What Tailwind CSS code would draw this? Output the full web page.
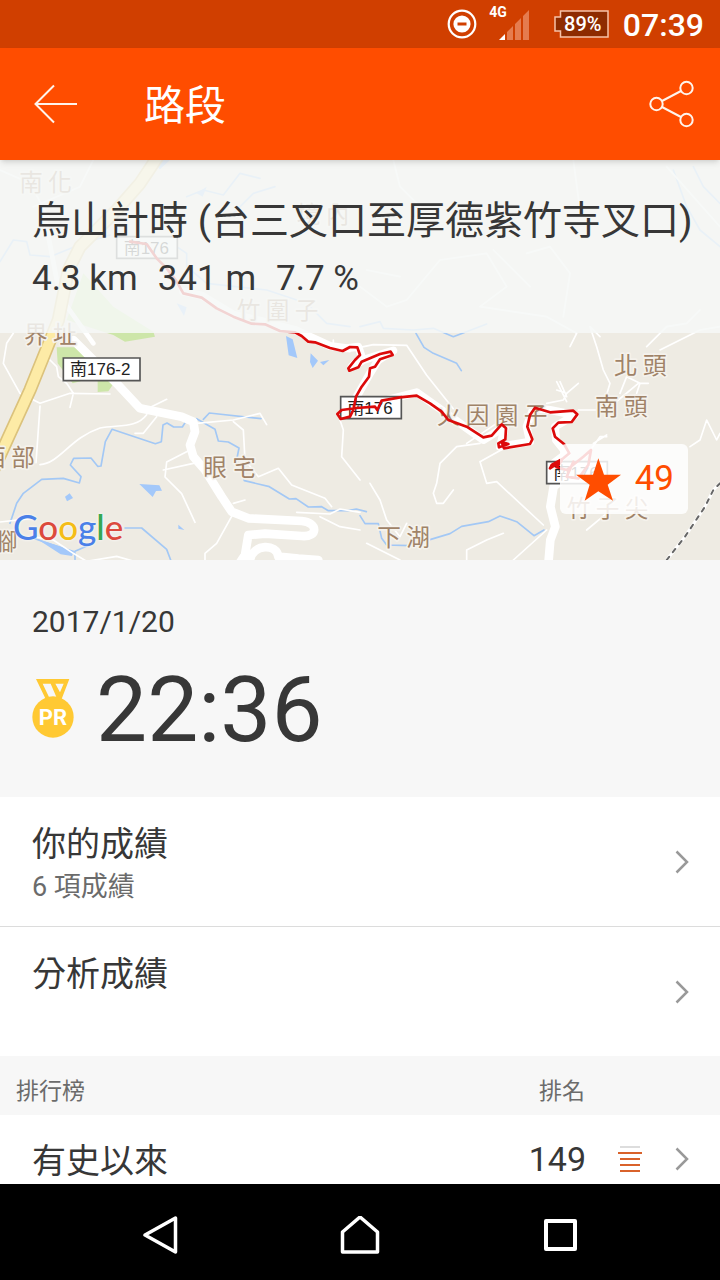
<!DOCTYPE html>
<html lang="zh-Hant">
<head>
    <meta charset="UTF-8">
    <meta name="viewport" content="width=device-width, initial-scale=1.0">
    <title>路段</title>
    <script src="https://cdn.jsdelivr.net/npm/@tailwindcss/browser@4"></script>
</head>
<body class="bg-white text-[#373737] font-[Roboto,'Noto_Sans_CJK_TC',sans-serif]">
    <div class="flex h-screen flex-col">
        <!-- Status bar -->
        <div class="flex h-12 shrink-0 items-center justify-end bg-[#d03f00] pr-4 text-white">
            <svg class="mr-3 size-[30px]" viewBox="0 0 30 30" fill="none">
                <circle cx="15" cy="15" r="13.3" stroke="#fff" stroke-width="2.2"/>
                <circle cx="15" cy="15" r="8.6" fill="#fff"/>
                <path d="M10.5 15h9" stroke="#d03f00" stroke-width="3"/>
            </svg>
            <div class="mr-6 flex h-9 items-start">
                <span class="text-sm/3 font-bold">4G</span>
                <svg class="-ml-2 h-9 w-[30px]" viewBox="0 0 30 36">
                    <path d="M0 34l6-6v6z" fill="#fff"/>
                    <path d="M8 34v-8l6-6v14zM16 34V18l6-6v22zM24 34V10l6-6v30z" fill="#e57c4f"/>
                </svg>
            </div>
            <div class="relative mr-[14px] flex h-7 w-[56px] items-center justify-center pl-1">
                <svg class="absolute inset-0 size-full" viewBox="0 0 56 28">
                    <path d="M7.500 1H55v26H7.500v-6H2V7h5.500z" fill="#8e2b00" stroke="#f6c2a8" stroke-width="1.500"/>
                </svg>
                <span class="relative text-xl/6 font-medium">89%</span>
            </div>
            <span class="pt-[2px] text-[32px]/[40px] font-medium">07:39</span>
        </div>

        <!-- App bar -->
        <header class="relative z-10 flex h-28 shrink-0 items-center bg-[#ff4d00] px-6 text-white shadow-md">
            <button type="button" aria-label="返回" class="flex h-16 w-16 items-center justify-center">
                <svg class="h-10 w-11" viewBox="0 0 44 40" fill="none" stroke="#fff4ec" stroke-width="2">
                    <path d="M20 1.500L1.500 20 20 38.500M1.500 20H43"/>
                </svg>
            </button>
            <h1 class="ml-14 flex-1 pt-1 text-[41px]/[56px]">路段</h1>
            <button type="button" aria-label="分享" class="flex h-16 w-12 items-center justify-center">
                <svg class="h-12 w-12" viewBox="0 0 48 48" fill="none" stroke="#fff4ec" stroke-width="2">
                    <circle cx="8.500" cy="24" r="6.200"/>
                    <circle cx="38.500" cy="8" r="6.200"/>
                    <circle cx="38.500" cy="40" r="6.200"/>
                    <path d="M14 21L33 11M14 27l19 10"/>
                </svg>
            </button>
        </header>

        <main class="min-h-0 flex-1 overflow-y-auto [scrollbar-width:none]">
            <!-- Map -->
            <section class="relative h-[400px] overflow-hidden bg-[#eeebe3]">
                <svg class="absolute inset-0 size-full" viewBox="0 0 2160 1200" preserveAspectRatio="xMidYMid slice" fill="none" stroke-linejoin="round" stroke-linecap="round">
                    <!-- parks -->
                    <path d="M200 480L250 340 340 440 460 515 465 530 375 545 340 525zM170 562h60l110 110-15 22-32 2v-46l-75 20-45-60z" fill="#cde6a9"/>
                    <!-- water -->
                    <g stroke="#a3c8f5" stroke-width="5">
                        <path d="M0 305L40 240 80 245 90 285 150 290 250 250 330 225M560 110l50-20 60 15 50-65 60 15M700 160l60-60 65-20M530 260l30 20v40l60 50 180 20 120 40 60 60 70 10"/>
                        <path d="M30 1090l20-60 20-30 55-42 65-3 48 14 5-19-32-35 10-20 52-1 20 25 10-1 13-73 20-37 130 43 18-6 5-50 12-6 20 12h26l18-28M590 776l55 32 10 35 30 3 32 18-6 30 22 68 75 18 60 37 20-1 37 25 40-1 20 12h60l24-5 30 8M610 778l18-19 155 17M105 1136l120 42v20M375 1104h50l75 64 12 32M225 1174l50-22"/>
                        <path d="M1080 500l60-15 10 20 90 5 60-5 60 25 100-38M1248 520l24 42 28 18 70 30 14 22M1080 1067l15 24h40l10 44 15 20 70 2 120-36 35-22 80-14 35-17 50 17 52 42 30-17M2020 30l40 110 40 70 60 50M2080 20l30 60 50 50"/>
                    </g>
                    <path d="M858 528l20 10 14 56-26-8zM932 580l22 22-16 22-8-18zM960 606l28-6-18 16zM418 972l60 4 8 16-18 1-10 18zM195 1010l14-10 10 14-18 10zM535 1094l18 16-18-4zM110 1136l112 36-6 16-34-5zM450 0h60l-30 28zM530 430l30 12-8 26zM590 100l30-20-12 30z" fill="#a3c8fa"/>
                    <!-- small roads -->
                    <g stroke="#fff" stroke-width="5">
                        <path d="M0 30l90 40 60 110M280 0l-40 80-140 60M40 520l-20 30-10 60 50 90 60 30 90-30 120 2M150 600l20 20 5 30 25 20 20 30-10 42M120 738l-12 170M120 914c60-5 90-80 180-110 60-10 110 0 140-40M430 752l70-34M470 770l-40 50-25 0M590 790l110-10 80-20 20 34M700 785l30 25 5 90 40 50 60-25 40 50 100 40 20 25M570 870l-70 36-5 45 50 50 40 86M490 930l90-20M700 1060l-50 90-35 30v20M700 1030l35-10M0 1086l90-10M100 1130l60 10 60 40 40 24 90-15 70 20M890 1057l100 5 30-15 60 10M960 1070l60 30 60 10M1020 780l10 30-5 80 55 70M1000 540v25l50 10"/>
                        <path d="M1080 562l40-8 100 2 60 90 80 100M1400 850l90-60M1440 850l-70 10-50 50-10 60-10 30 10 30h20l30-40M1440 905l20 65 30-5 140 130M1440 905l90-50M1640 730l50-10 10-20-30-10M1700 725l-30-60M1700 710l-20-45M1700 700l35-30M1735 750l90 0 30-30 60-50 30 0M1800 530l-30-30 20 60 20 70 20 40-15 50M1940 560l60-60 60-10 40-40M1980 570l120-60 60-10M1860 700l20-50 40 20-10 30M1780 850l40-25M1700 970l100-140 20 0M1640 1110l-100 90M1760 1110l60-50M2070 860l30-20 20-60 30 60 10-20M1110 970l30 50 20 60 40 50 20-40M1400 1200l0-30 60-30 50-20M1100 1150l100 50M1080 380l80 60 60-20 100-120 140-20 60 100-80 60 200 30 90 50-20 40M1180 0l20 80 60 60M1480 270l110 110M1580 280l70-20 60 80-20 130M1720 0l20 150M2000 20l160 180M1100 330l100 20"/>
                    </g>
                    <!-- route 176-2 -->
                    <path d="M130 150l50 260 100 140" stroke="#fff" stroke-width="14"/>
                    <path d="M220 540L350 670l70 75 125 25 35 15 5 30-15 40 10 35 35 40 50 80 30 45 50 20 160 8c50 4 50 50 0 45l-110-7-50 4-10 60-20 30" stroke="#fff" stroke-width="26"/>
                    <path d="M750 1200c10-50 80-50 85-10l60 6 60 4" stroke="#fff" stroke-width="26"/>
                    <path d="M1646 1200l5-60 15-40-15-60 10-60 60-50" stroke="#fff" stroke-width="26"/>
                    <!-- highway -->
                    <path d="M480-20L420 70 350 150 240 260 205 330 175 480 90 690-20 930" stroke="#dbc27c" stroke-width="40"/>
                    <path d="M480-20L420 70 350 150 240 260 205 330 175 480 90 690-20 930" stroke="#fdeba6" stroke-width="30"/>
                    <!-- railway -->
                    <path d="M2000 1200l55-70 60-90 25-50 25-25" stroke="#fff" stroke-width="9"/>
                    <path d="M2000 1200l55-70 60-90 25-50 25-25" stroke="#666" stroke-width="6" stroke-dasharray="12 18"/>
                    <!-- route 176 -->
                    <path d="M550 395L605 407 700 464 795 486 885 510 990 558 1040 565 1075 560 1085 590 1055 620 1095 598 1180 572 1135 600 1110 640 1070 710 1055 760 1025 765M1130 728L1250 697 1325 750 1400 805 1450 840 1515 800 1500 860 1590 845 1580 800 1600 745 1650 750 1725 765 1665 800 1668 840 1700 880 1660 910" stroke="#fff" stroke-width="24"/>
                    <!-- road plates -->
                    <g fill="#fff" stroke="#555" stroke-width="5" stroke-linejoin="miter">
                        <path d="M190 594h230v68H190zM350 230h182v65H350zM1022 710h182v66h-182zM1640 905h182v66h-182z"/>
                    </g>
                    <g class="font-['Liberation_Sans','Noto_Sans_CJK_TC',sans-serif]" font-size="51" fill="#222">
                        <text x="210" y="646">南176-2</text>
                        <text x="371" y="281">南176</text>
                        <text x="1042" y="762">南176</text>
                        <text x="1660" y="957">南176</text>
                    </g>
                    <!-- place names -->
                    <g class="font-['Noto_Sans_CJK_TC',sans-serif] tracking-[16px]" font-size="71" fill="#a08368" stroke="#f5f2ec" stroke-width="10" paint-order="stroke">
                        <text x="58" y="94">南化</text>
                        <text x="890" y="190">境內</text>
                        <text x="710" y="478">竹圍子</text>
                        <text x="72" y="550">界址</text>
                        <text x="-53" y="917">西部</text>
                        <text x="610" y="947">眼宅</text>
                        <text x="-18" y="1170">腳</text>
                        <text x="1842" y="643">北頭</text>
                        <text x="1785" y="764">南頭</text>
                        <text x="1310" y="792">火因園子</text>
                        <text x="1700" y="1070">竹子尖</text>
                        <text x="1132" y="1158">下湖</text>
                    </g>
                    <!-- segment track -->
                    <path d="M390 245L440 252 470 295 500 325 530 365 550 400 605 413 650 445 700 470 755 491 795 493 840 513 885 517 905 528 925 545 945 547 990 564 1028 573 1050 561 1072 562 1080 585 1065 600 1045 625 1048 632 1075 622 1085 605 1140 582 1172 575 1178 585 1140 598 1125 620 1110 625 1107 650 1085 680 1068 710 1060 750 1050 770 1022 777 1012 762 1025 750 1070 744 1125 740 1132 750 1145 722 1200 712 1250 707 1290 730 1325 755 1345 780 1400 800 1450 832 1475 827 1505 793 1518 805 1516 838 1495 850 1497 862 1525 852 1505 846 1512 865 1590 852 1597 838 1582 800 1590 765 1605 743 1650 757 1720 752 1732 763 1715 786 1675 788 1658 805 1665 830 1692 852 1708 880 1690 895 1655 915 1650 925 1685 902 1670 922 1700 930 1750 890 1773 870 1765 915 1735 955 1700 950 1720 905" stroke="#dc0a0a" stroke-width="8"/>
                </svg>

                <div class="relative h-[173px] bg-[#f6f8f7]/85 pt-[33px] pl-8">
                    <h2 class="text-[39px]/[56px] whitespace-nowrap">烏山計時 (台三叉口至厚德紫竹寺叉口)</h2>
                    <p class="flex gap-5 pt-[6px] text-[35px]/[48px]">
                        <span>4.3 km</span>
                        <span>341 m</span>
                        <span>7.7 %</span>
                    </p>
                </div>

                <div class="absolute bottom-3 left-[13px] font-[Lato,sans-serif] text-[35px]/[44px] font-medium text-[#4a80e8] [text-shadow:0_0_3px_#fff]">G<span class="text-[#dc4a3d]">o</span><span class="text-[#f4bd17]">o</span>g<span class="text-[#36a853]">l</span><span class="text-[#dc4a3d]">e</span></div>

                <button type="button" aria-label="收藏 49" class="absolute right-8 bottom-[46px] flex h-[70px] items-center gap-[14px] rounded-md bg-white/85 pr-[14px] pl-4 text-[35px]/[48px] text-[#ff4d00]">
                    <svg class="h-[43px] w-[45px]" viewBox="653 412 135 128" fill="currentColor">
                        <path d="M720 412l17 50h51l-40 30 16 48-44-29-41 29 15-48-41-30h51z"/>
                    </svg>
                    49
                </button>
            </section>

            <!-- Personal record -->
            <section class="h-[237px] bg-[#f7f7f7] px-8 pt-10">
                <time datetime="2017-01-20" class="block text-[30px]/[44px]">2017/1/20</time>
                <div class="flex items-center gap-[22px] pt-2">
                    <svg class="h-[59px] w-[42px]" viewBox="0 0 126 177">
                        <path d="M12 0h100L88 62H42zM32 14l20 42h22L56 14zM70 14l14 26 11-26z" fill="#ffc933" fill-rule="evenodd"/>
                        <circle cx="63" cy="114" r="62" fill="#ffc933"/>
                        <text x="63" y="138" text-anchor="middle" font-size="66" font-weight="700" fill="#fff">PR</text>
                    </svg>
                    <p class="pt-1 text-[91px]/[108px]">22:36</p>
                </div>
            </section>

            <a href="#results" class="flex h-[130px] items-center justify-between border-b border-[#dcdcdc] pr-[31px] pl-8">
                <div class="h-[84px]">
                    <h3 class="text-[34px]/[48px]">你的成績</h3>
                    <p class="text-[27px]/[38px] text-[#6b6b6b]">6 項成績</p>
                </div>
                <svg class="h-6 w-[14px]" viewBox="0 0 14 24" fill="none" stroke="#999" stroke-width="2.500"><path d="M1.500 1.500L12 12 1.500 22.500"/></svg>
            </a>
            <a href="#analysis" class="flex h-[129px] items-center justify-between pr-[31px] pl-8">
                <div class="h-[84px]">
                    <h3 class="text-[34px]/[48px]">分析成績</h3>
                </div>
                <svg class="h-6 w-[14px]" viewBox="0 0 14 24" fill="none" stroke="#999" stroke-width="2.500"><path d="M1.500 1.500L12 12 1.500 22.500"/></svg>
            </a>

            <!-- Leaderboards -->
            <div class="flex h-[59px] items-center justify-between bg-[#f7f7f7] pt-3 pr-[135px] pl-4 text-[23px]/[32px] text-[#6b6b6b]">
                <span>排行榜</span>
                <span>排名</span>
            </div>
            <a href="#all-time" class="flex h-[88px] items-center pr-[31px] pl-8 text-[34px]/[48px]">
                <span class="flex-1 pt-1">有史以來</span>
                <span>149</span>
                <svg class="mr-[33px] ml-8 h-7 w-6" viewBox="0 0 24 28" fill="none" stroke="#d9622b" stroke-width="2">
                    <path d="M2 2h20" stroke="#ddd"/>
                    <path d="M0 8h24M2 14h20M2 20h20M2 26h20"/>
                </svg>
                <svg class="h-6 w-[14px]" viewBox="0 0 14 24" fill="none" stroke="#999" stroke-width="2.500"><path d="M1.500 1.500L12 12 1.500 22.500"/></svg>
            </a>
        </main>

        <!-- System navigation -->
        <nav class="flex h-24 shrink-0 items-center justify-center gap-[136px] bg-black pt-2">
            <button type="button" aria-label="返回" class="flex size-16 items-center justify-center">
                <svg class="h-10 w-10" viewBox="0 0 40 40" fill="none" stroke="#fff" stroke-width="3.500" stroke-linejoin="round"><path d="M5 19L35.500 2v34z"/></svg>
            </button>
            <button type="button" aria-label="主畫面" class="flex size-16 items-center justify-center">
                <svg class="h-10 w-10" viewBox="0 0 40 40" fill="none" stroke="#fff" stroke-width="3.500" stroke-linejoin="round"><path d="M2.500 16L20 1 37.500 16v20h-35z"/></svg>
            </button>
            <button type="button" aria-label="最近使用" class="flex size-16 items-center justify-center">
                <svg class="h-10 w-10" viewBox="0 0 40 40" fill="none" stroke="#fff" stroke-width="4" stroke-linejoin="round"><path d="M6 5h29v28H6z"/></svg>
            </button>
        </nav>
    </div>
</body>
</html>
